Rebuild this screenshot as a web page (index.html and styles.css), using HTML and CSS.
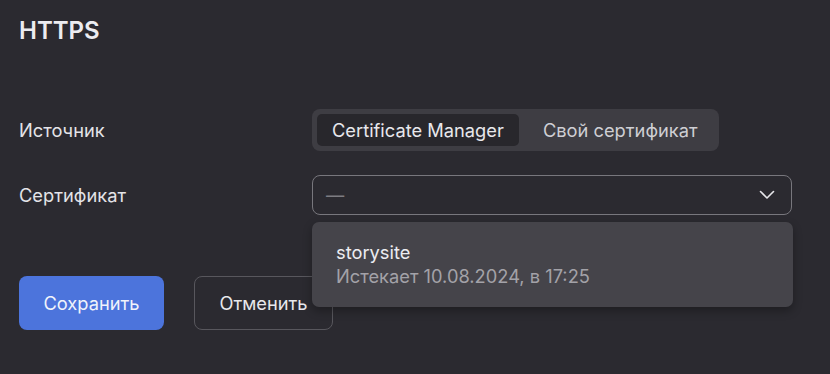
FILE: index.html
```html
<!DOCTYPE html>
<html lang="ru">
<head>
<meta charset="utf-8">
<link rel="stylesheet" href="styles.css">
</head>
<body>
<div class="page">
  <h1 class="title">HTTPS</h1>
  <div class="form">
    <div class="row">
      <div class="label">Источник</div>
      <div class="segmented">
        <div class="seg active">Certificate Manager</div>
        <div class="seg">Свой сертификат</div>
      </div>
    </div>
    <div class="row">
      <div class="label">Сертификат</div>
      <div class="select-wrap">
        <div class="select">
          <span class="placeholder">—</span>
          <svg class="chevron" width="16" height="10" viewBox="0 0 16 10"><path d="M1.5 1.5 L8 8 L14.5 1.5" fill="none" stroke="#e6e6ea" stroke-width="1.6" stroke-linecap="round" stroke-linejoin="round"/></svg>
        </div>
        <div class="popup">
          <div class="opt-title">storysite</div>
          <div class="opt-sub">Истекает 10.08.2024, в 17:25</div>
        </div>
      </div>
    </div>
  </div>
  <div class="actions">
    <button class="btn primary">Сохранить</button>
    <button class="btn secondary">Отменить</button>
  </div>
</div>
</body>
</html>
```
FILE: styles.css
```css
html, body {
  margin: 0;
  padding: 0;
  background: #2b2a30;
}
body {
  font-family: Inter, "Noto Sans", sans-serif;
  color: #e8e8ec;
  width: 830px;
  height: 374px;
  overflow: hidden;
}
.page {
  padding: 15px 19px 0 19px;
}
.title {
  margin: 0;
  font-size: 24px;
  font-weight: 600;
  line-height: 32px;
  color: #ececf0;
}
.form {
  margin-top: 62px;
  display: flex;
  flex-direction: column;
  gap: 24px;
}
.row {
  display: flex;
  align-items: center;
}
.label {
  width: 293px;
  font-size: 18.3px;
  color: #e4e4e8;
}
.row:nth-child(2) .label {
  align-self: flex-start;
  margin-top: 9px;
}
.segmented {
  display: flex;
  background: #3e3d43;
  border-radius: 8px;
  padding: 5px;
  gap: 4px;
}
.seg {
  height: 32px;
  line-height: 32px;
  padding: 0 15px;
  font-size: 18.3px;
  color: #cfcfd4;
  border-radius: 5px;
  white-space: nowrap;
}
.seg.active {
  background: #28272c;
  color: #e8e8ec;
}
.seg:last-child {
  padding: 0 16px 0 20px;
}
.select-wrap {
  position: relative;
  width: 480px;
}
.select {
  height: 38px;
  border: 1px solid #78777d;
  border-radius: 8px;
  display: flex;
  align-items: center;
  justify-content: space-between;
  padding: 0 16px 0 13px;
}
.placeholder {
  color: #7d7c82;
  font-size: 18.3px;
}
.chevron {
  display: block;
}
.popup {
  position: absolute;
  left: 0;
  top: 47px;
  width: 481px;
  height: 85px;
  box-sizing: border-box;
  background: #45444a;
  border-radius: 7px;
  box-shadow: 0 4px 10px rgba(0,0,0,0.3);
  padding: 18px 24px;
  z-index: 2;
}
.opt-title {
  font-size: 18.3px;
  line-height: 24px;
  color: #ececf0;
}
.opt-sub {
  font-size: 18.3px;
  line-height: 24px;
  color: #a3a2a8;
}
.actions {
  margin-top: 61px;
  display: flex;
  gap: 30px;
}
.btn {
  font-family: Inter, "Noto Sans", sans-serif;
  font-size: 18.3px;
  height: 54px;
  border-radius: 8px;
  cursor: pointer;
  padding: 0;
}
.primary {
  width: 145px;
  background: #4c74dc;
  border: none;
  color: #f0f3fb;
}
.secondary {
  width: 139px;
  background: transparent;
  border: 1px solid #58575d;
  color: #e8e8ec;
}
```
